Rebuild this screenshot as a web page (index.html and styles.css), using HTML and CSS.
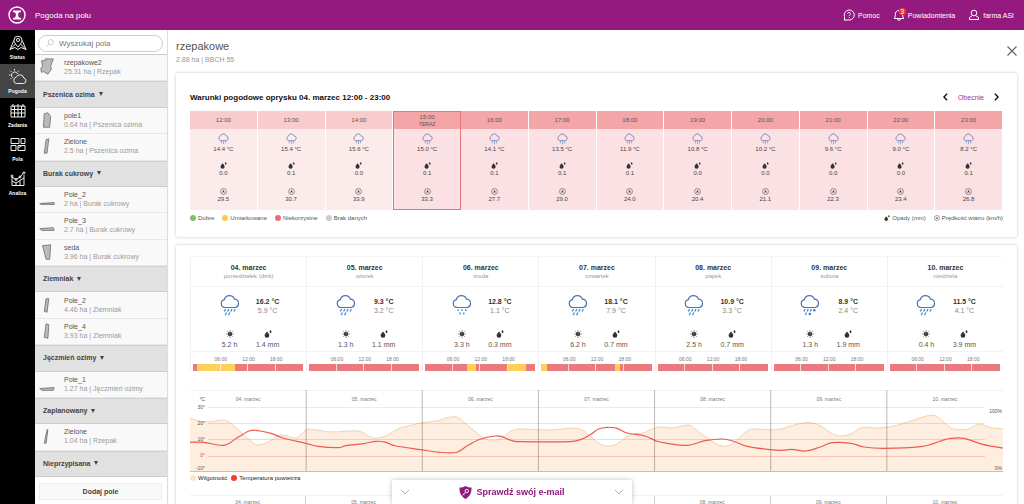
FILE: index.html
```html
<!DOCTYPE html>
<html lang="pl">
<head>
<meta charset="utf-8">
<title>Pogoda na polu</title>
<link rel="stylesheet" href="styles.css">
</head>
<body>
<svg class="sprite" aria-hidden="true">
  <symbol id="rain" viewBox="0 0 20 22">
    <path d="M5 13.500a4 4 0 0 1-.6-7.900A5.200 5.200 0 0 1 14.400 5.200a4.200 4.200 0 0 1 .8 8.300z" fill="none" stroke="#4c72ab" stroke-width="1.200"/>
    <path d="M5.600 15l-1.200 2.600M8.800 15l-1.200 2.600M12 15l-1.200 2.600M15.200 15l-1.200 2.600M6.400 18.600l-1.200 2.600M9.800 18.600l-1.200 2.600" stroke="#3a8fe0" stroke-width="1.300" fill="none"/>
  </symbol>
  <symbol id="drizzle" viewBox="0 0 20 22">
    <path d="M5 13.500a4 4 0 0 1-.6-7.900A5.200 5.200 0 0 1 14.400 5.200a4.200 4.200 0 0 1 .8 8.300z" fill="none" stroke="#4c72ab" stroke-width="1.200"/>
    <path d="M6.200 15.200v1.900M10 15.200v1.900M13.800 15.200v1.900M8 18.600v1.900M11.800 18.600v1.900" stroke="#3a8fe0" stroke-width="1.400" fill="none"/>
  </symbol>
  <symbol id="sleet" viewBox="0 0 20 22">
    <path d="M5 13.500a4 4 0 0 1-.6-7.900A5.200 5.200 0 0 1 14.400 5.200a4.200 4.200 0 0 1 .8 8.300z" fill="none" stroke="#4c72ab" stroke-width="1.200"/>
    <path d="M5 15l-1 2.400M8.200 15l-1 2.400M11.400 15l-1 2.400M6.400 18.600l-1 2.400" stroke="#3a8fe0" stroke-width="1.300" fill="none"/>
    <circle cx="14.300" cy="16.200" r="1.200" fill="#2f78d0"/><circle cx="9.800" cy="20" r="1.200" fill="#2f78d0"/>
  </symbol>
  <symbol id="shower" viewBox="0 0 20 22">
    <path d="M5 14a4.300 4.300 0 0 1-.6-8.300A5.300 5.300 0 0 1 14.600 5.200a4.500 4.500 0 0 1 .8 8.800z" fill="none" stroke="#8288b5" stroke-width="1.700"/>
    <path d="M6 14v5M10 14v6.500M14 14v5" stroke="#8ea8d6" stroke-width="1.800" fill="none"/>
  </symbol>
  <symbol id="drop" viewBox="0 0 8 8">
    <path d="M3 1.500C4.500 3.200 5.300 4.300 5.300 5.500a2.300 2.300 0 0 1-4.700 0C.6 4.300 1.600 3.200 3 1.500z" fill="#333"/>
    <path d="M6.500 0c.7.900 1 1.400 1 1.900a1 1 0 0 1-2 0c0-.5.400-1 1-1.900z" fill="#333"/>
  </symbol>
  <symbol id="wind" viewBox="0 0 8 8">
    <circle cx="4" cy="4" r="3.400" fill="none" stroke="#555" stroke-width=".7"/>
    <path d="M4 1.900l1.600 3.600L4 4.800l-1.600.7z" fill="#444"/>
  </symbol>
  <symbol id="sun" viewBox="0 0 8 8">
    <circle cx="4" cy="4" r="2.100" fill="#222"/>
    <path d="M4 0v8M0 4h8M1.200 1.200l5.600 5.600M6.800 1.200L1.200 6.800" stroke="#555" stroke-width=".6"/>
  </symbol>
  <symbol id="chev" viewBox="0 0 6 10"><path d="M5 1L1 5l4 4" fill="none" stroke="currentColor" stroke-width="1.800"/></symbol>
  <symbol id="down" viewBox="0 0 10 6"><path d="M1 1l4 4 4-4" fill="none" stroke="currentColor" stroke-width=".8"/></symbol>
</svg>

<header class="topbar">
  <a class="brand" href="#" aria-label="Start">
    <svg viewBox="0 0 18 18"><circle cx="9" cy="9" r="8" fill="none" stroke="#fff" stroke-width="1.400"/><path d="M5 4.500h8v1.700h-1.600c-.9.700-1.300 1.600-1.300 2.800s.4 2.100 1.300 2.800H13v1.700H5v-1.700h1.600c.9-.7 1.300-1.600 1.300-2.800s-.4-2.100-1.300-2.800H5z" fill="#fff"/></svg>
  </a>
  <h1 class="page-title">Pogoda na polu</h1>
  <nav class="user-nav">
    <a href="#"><svg class="nav-icon" viewBox="0 0 12 12"><path d="M1.500 11.500V7.500A5 5 0 1 1 6.200 11H1.500" fill="none" stroke="#fff"/><path d="M4.700 4.700a1.400 1.400 0 1 1 2 1.300c-.4.200-.5.400-.5.900M6.200 7.900v1" fill="none" stroke="#fff" stroke-width=".9"/></svg>Pomoc</a>
    <a href="#" class="bell"><svg class="nav-icon" viewBox="0 0 12 12"><path d="M1 9.500c1-.7 1.300-1.600 1.300-4A3.600 3.600 0 0 1 6 1.500a3.600 3.600 0 0 1 3.600 4c0 2.400.3 3.300 1.400 4zM4.500 9.800a1.500 1.500 0 0 0 3 0" fill="none" stroke="#fff"/></svg><span class="badge">3</span>Powiadomienia</a>
    <a href="#"><svg class="nav-icon" viewBox="0 0 12 12"><circle cx="6" cy="4" r="2.800" fill="none" stroke="#fff"/><path d="M4.500 6.500L1.500 8.500v2h9v-2l-3-2" fill="none" stroke="#fff"/></svg>farma ASI</a>
  </nav>
</header>

<div class="shell">
  <nav class="rail">
    <a href="#"><svg viewBox="0 0 18 16"><path d="M9 12C6 8.500 5 7 5 5.200a4 4 0 0 1 8 0C13 7 12 8.500 9 12z" /><circle cx="9" cy="5" r="1.600"/><path d="M4.800 5.500L1 14.500l5-2 3 2 3-2 5 2-3.800-9M1 14.500L6.500 9M17 14.500L11.500 9"/></svg>Status</a>
    <a href="#" class="active"><svg viewBox="0 0 18 16"><path d="M7.500 14.500a3.200 3.200 0 0 1-.3-6.300 4 4 0 0 1 7.600.8 2.800 2.800 0 0 1-.3 5.500zM3.600 8.600A3.200 3.200 0 1 1 8.700 5M5.500 0v1.500M1.300 1.800l1 1M0 6h1.500M9.800 1.800l-1 1M1.300 10.200l1-1"/></svg>Pogoda</a>
    <a href="#"><svg viewBox="0 0 18 16"><path d="M2 3h14v11H2zM2 6.500h14M2 10h14M5.500 3v11M9 3v11M12.500 3v11M4 1v3M14 1v3M9 1v2"/></svg>Zadania</a>
    <a href="#"><svg viewBox="0 0 18 16"><path d="M2 1.500h8v5H2zM12 1.500h4v5h-4zM2 8.500h5v5H2zM9 8.500h7v5H9zM9 11l4-2.500"/></svg>Pola</a>
    <a href="#"><svg viewBox="0 0 18 16"><path d="M3 6v8.500h12V4M3 10l4 2 8-5M7 12v2.500M11 9.500v5M3 6l4 2.500L11 6l3.500-4"/><circle cx="3" cy="5" r="1"/><circle cx="7" cy="8.500" r="1"/><circle cx="11" cy="6" r="1"/><circle cx="15" cy="1.800" r="1"/></svg>Analiza</a>
  </nav>

  <aside class="fields">
    <div class="search">
      <svg viewBox="0 0 8 8" aria-hidden="true"><circle cx="4.800" cy="3.200" r="2.600" fill="none" stroke="#aaa" stroke-width=".6"/><path d="M2.900 5.100L.5 7.500" stroke="#aaa" stroke-width=".6"/></svg>
      <input type="text" placeholder="Wyszukaj pola" aria-label="Wyszukaj pola">
    </div>
    <div class="field-list" id="fields"></div>
    <div class="add"><button type="button">Dodaj pole</button></div>
  </aside>

  <main class="main">
    <div class="field-head">
      <div>
        <h2>rzepakowe</h2>
        <p>2.88 ha | BBCH 55</p>
      </div>
      <button type="button" class="close" aria-label="Zamknij"><svg viewBox="0 0 10 10"><path d="M.5.5l9 9M9.500.5l-9 9" stroke="#666" stroke-width="1.200"/></svg></button>
    </div>

    <section class="card spray">
      <div class="spray-head">
        <h3>Warunki pogodowe oprysku 04. marzec 12:00 - 23:00</h3>
        <div class="pager">
          <button type="button" aria-label="Poprzednie"><svg><use href="#chev"/></svg></button>
          <a href="#">Obecnie</a>
          <button type="button" class="next" aria-label="Następne"><svg><use href="#chev"/></svg></button>
        </div>
      </div>
      <table class="hours">
        <thead><tr id="h-time"></tr></thead>
        <tbody><tr id="h-temp"></tr><tr id="h-rain"></tr><tr id="h-wind"></tr></tbody>
      </table>
      <div class="legend">
        <span><i class="dot good"></i>Dobre</span>
        <span><i class="dot fair"></i>Umiarkowane</span>
        <span><i class="dot bad"></i>Niekorzystne</span>
        <span><i class="dot none"></i>Brak danych</span>
        <span class="push"><svg><use href="#drop"/></svg>Opady (mm)</span>
        <span><svg><use href="#wind"/></svg>Prędkość wiatru (km/h)</span>
      </div>
    </section>

    <section class="card forecast">
      <div class="days" id="days"></div>
      <div class="chart">
        <svg class="plot" viewBox="0 0 813 82" preserveAspectRatio="none" id="plot"></svg>
        <div class="chart-days" id="chart-days"></div>
        <div class="axis"><span>°C</span><span>30°</span><span>20°</span><span>10°</span><span class="zero">0°</span><span>-10°</span></div>
        <div class="axis right"><span>100%</span><span>0%</span></div>
      </div>
      <div class="legend series">
        <span><i class="dot humidity"></i>Wilgotność</span>
        <span><i class="dot temp"></i>Temperatura powietrza</span>
      </div>
      <div class="chart-days second" id="chart-days-2"></div>
    </section>
  </main>
</div>

<div class="notice">
  <svg class="arrow"><use href="#down"/></svg>
  <a href="#"><svg class="shield" viewBox="0 0 13 13"><path d="M6.500 0C8.500 1.200 10.500 1.500 12.500 1.500c.3 5-1.500 9-6 11.500C2 10.500.2 6.500.5 1.500c2 0 4-.3 6-1.500z" fill="#8e1a7c"/><circle cx="7.800" cy="5" r="1.700" fill="none" stroke="#fff" stroke-width=".9"/><path d="M6.500 6.300L3.500 9.200M4.600 8.200l1 1" stroke="#fff" stroke-width=".9"/></svg>Sprawdź swój e-mail</a>
  <svg class="arrow"><use href="#down"/></svg>
</div>
<script src="app.js"></script>
</body>
</html>
```

FILE: styles.css
```css
* { box-sizing: border-box; }
body {
  margin: 0;
  height: 100vh;
  display: flex;
  flex-direction: column;
  overflow: hidden;
  background: #fff;
  color: #555;
  font: 7px/9px "Liberation Sans", Arial, sans-serif;
}
h1, h2, h3, p { margin: 0; font-weight: normal; }
a { color: inherit; text-decoration: none; }
button { font: inherit; color: inherit; background: none; border: 0; padding: 0; }
svg { display: block; fill: none; }
.sprite { position: absolute; width: 0; height: 0; }

.topbar {
  flex: none;
  height: 30px;
  display: flex;
  align-items: center;
  background: #941a80;
  color: #fff;
}
.brand { width: 35px; padding-left: 8px; }
.brand svg { width: 18px; height: 18px; }
.page-title { font-size: 8px; }
.user-nav { margin-left: auto; padding-right: 10px; display: flex; gap: 13px; }
.user-nav a { display: flex; align-items: center; gap: 3px; position: relative; }
.nav-icon { width: 12px; height: 12px; }
.badge {
  position: absolute;
  left: 6px;
  top: -1px;
  width: 7px;
  height: 7px;
  border-radius: 3px;
  background: #e8372c;
  font-size: 7px;
  line-height: 7px;
  text-align: center;
}

.shell { flex: 1; min-height: 0; display: flex; }
.rail { flex: none; width: 35px; background: #000; color: #fff; font-size: 5px; line-height: 6px; font-weight: bold; }
.rail a { height: 34px; padding-top: 5px; display: flex; flex-direction: column; align-items: center; gap: 3px; }
.rail a.active { background: #444; }
.rail svg { width: 18px; height: 16px; stroke: #eee; stroke-width: 1; }

.fields {
  flex: none;
  width: 133px;
  display: flex;
  flex-direction: column;
  border-right: 1px solid #ddd;
}
.search { padding: 5px 4px 2px 3px; position: relative; border-bottom: 1px solid #ccc; }
.search svg { position: absolute; left: 11px; top: 9px; width: 8px; height: 8px; }
.search input {
  display: block;
  width: 100%;
  height: 17px;
  padding: 0 8px 0 20px;
  border: 1px solid #ccc;
  border-radius: 9px;
  font: 8px "Liberation Sans", Arial, sans-serif;
}
.search input::placeholder { color: #777; opacity: 1; }
.field-list { flex: 1; display: grid; grid-auto-rows: 1fr; background: #f9f9f9; }
.group {
  display: flex;
  align-items: center;
  gap: 4px;
  padding: 0 9px 1px 8px;
  background: #e1e1e1;
  border-bottom: 1px solid #ccc;
  border-top: 1px solid #d0d0d0;
  font-weight: bold;
  color: #444;
  text-align: left;
}
.group::after { content: ""; border: 2px solid transparent; border-top: 4px solid #444; border-bottom: 0; }
.field { display: flex; align-items: center; padding-bottom: 1px; border-bottom: 1px solid #e8e8e8; }
.field svg { width: 18px; height: 18px; margin: 0 8px 0 3px; fill: #bbb; stroke: #777; stroke-width: 1; }
.field small { display: block; font-size: 7px; color: #999; }
.add { padding: 6px 5px 4px 4px; }
.add button { width: 100%; height: 17px; background: #f9f9f9; border: 1px solid #eee; font-weight: bold; color: #444; }

.main { flex: 1; min-width: 0; padding: 0 7px 0 8px; overflow: hidden; }
.field-head { height: 43px; padding-top: 10px; display: flex; justify-content: space-between; align-items: flex-start; }
.field-head h2 { font-size: 11px; line-height: 12px; color: #555; }
.field-head p { color: #999; margin-top: 3px; }
.close { margin-top: 6px; }
.close svg { width: 10px; height: 10px; }
.card { background: #fff; border-radius: 2px; box-shadow: 0 0 3px rgba(0, 0, 0, .25); padding: 0 14px; }
.spray { padding-top: 16px; padding-bottom: 15px; }
.spray-head { display: flex; justify-content: space-between; align-items: center; height: 16px; margin-bottom: 6px; }
.spray-head h3 { font-size: 8px; font-weight: bold; color: #111; }
.pager { display: flex; align-items: center; gap: 10px; padding-right: 4px; font-size: 7px; color: #a2329a; }
.pager svg { width: 5px; height: 8px; color: #111; }
.pager .next { transform: scaleX(-1); }

.hours { width: 100%; table-layout: fixed; border-collapse: separate; border-spacing: 0; font-size: 6px; line-height: 8px; text-align: center; }
.hours th, .hours td { padding: 0; border-right: 1px solid #fff; }
.hours th { height: 18px; font-weight: normal; background: #f3a5a7; }
.hours td { height: 27px; vertical-align: top; background: #fbe1e3; color: #444; }
.hours th.past { background: #f8cbcd; }
.hours td.past { background: #fcebeb; }
.hours .now { border-left: 1px solid #e0787d; border-right-color: #e0787d; }
.hours th.now { border-top: 1px solid #e0787d; }
.hours tr:last-child td.now { border-bottom: 1px solid #e0787d; }
.hours th small { display: block; font-size: 5px; line-height: 7px; }
.hours svg { margin: 0 auto; width: 7px; height: 7px; }
#h-temp td { padding-top: 4px; }
#h-temp svg { width: 11px; height: 12px; }
#h-rain td { padding-top: 6px; }
#h-wind td { padding-top: 5px; }

.legend { display: flex; align-items: center; gap: 8px; margin-top: 4px; font-size: 6px; line-height: 8px; color: #555; }
.legend span { display: flex; align-items: center; gap: 2px; }
.legend svg { width: 6px; height: 6px; }
.legend .push { margin-left: auto; }
.dot { width: 6px; height: 6px; border-radius: 50%; }
.good { background: #7cc36a; }
.fair { background: #fcc846; }
.bad { background: #ea6f78; }
.none { background: #ccc; }
.humidity { background: #fde3c8; }
.temp { background: #f23c30; }

.forecast { margin-top: 8px; padding-top: 11px; padding-bottom: 14px; }
.days { display: grid; grid-template-columns: repeat(7, 1fr); border-top: 1px solid #f6f6f6; }
.day { text-align: center; border-left: 1px solid #f2f2f2; }
.day header { height: 30px; padding-top: 6px; border-bottom: 1px solid #f2f2f2; }
.day header b { display: block; color: #333; }
.day header span { font-size: 6px; line-height: 8px; display: block; color: #999; }
.day .facts { height: 65px; padding-top: 7px; display: grid; grid-template-columns: 38px 38px; justify-content: center; justify-items: center; grid-template-rows: 36px 20px; border-bottom: 1px solid #f2f2f2; }
.day .sky { width: 20px; height: 22px; }
.day .temps { padding-top: 3px; }
.day .temps b { display: block; color: #333; }
.day .temps span { color: #888; }
.day .fact { font-size: 7px; }
.day .fact svg { width: 8px; height: 8px; margin: 0 auto 2px; }
.day .scale { display: flex; justify-content: center; margin: 3px 2px 0; font-size: 5px; line-height: 8px; color: #777; }
.day .scale span { width: 25%; }
.bar { height: 7px; margin: 1px 3px 0 2px; background: #ea7a7e; display: flex; }
.bar i { width: 25%; border-right: 1px solid rgba(255, 255, 255, .7); }

.chart { position: relative; margin-top: 19px; }
.plot { width: 100%; height: 82px; }
.chart-days { position: absolute; inset: 0 0 auto; display: grid; grid-template-columns: repeat(7, 1fr); font-size: 5px; line-height: 8px; text-align: center; color: #777; }
.chart-days span { padding-top: 5px; }
.axis { position: absolute; inset: 5px auto 0 1px; width: 14px; display: flex; flex-direction: column; font-size: 5px; line-height: 8px; text-align: right; }
.axis span { flex: none; height: 16px; }
.axis span:first-child { height: 8px; }
.axis span:nth-child(5) { height: 13px; }
.axis .zero { color: #e8372c; }
.axis.right { inset: 17px 1px 0 auto; width: 16px; justify-content: space-between; }
.axis.right span { height: 8px; }
.series { margin-top: 2px; gap: 4px; color: #222; }
.second { position: static; margin-top: 13px; border-top: 1px solid #f2f2f2; }
.second span { border-right: 1px solid #ccc; padding: 3px 0 60px; line-height: 6px; }
.second span:last-child { border-right: 0; }

.notice {
  position: fixed;
  left: 50%;
  bottom: 0;
  transform: translateX(-50%);
  width: 240px;
  height: 24px;
  padding: 0 8px;
  display: flex;
  align-items: center;
  justify-content: space-between;
  background: #fff;
  box-shadow: 0 0 5px rgba(0, 0, 0, .25);
  color: #8e1a7c;
  font-size: 9px;
  font-weight: bold;
}
.notice a { display: flex; align-items: center; gap: 4px; }
.shield { width: 13px; height: 13px; }
.arrow { width: 10px; height: 6px; color: #999; }
```

FILE: app.js
```js
const use = (id, cls = "") => `<svg class="${cls}"><use href="#${id}"/></svg>`;
const fill = (id, html) => { document.getElementById(id).innerHTML = html; };

const fields = [
  ["rzepakowe2", "25.31 ha | Rzepak", "3,3 7,3 7,1 16,1 13,9 14,12 10,18 5,15 3,16 2,12 4,9"],
  "Pszenica ozima",
  ["pole1", "0.64 ha | Pszenica ozima", "6,3 10,2 13,6 12,18 5,18"],
  ["Zielone", "2.5 ha | Pszenica ozima", "8,3 11,2 9,18 6,18"],
  "Burak cukrowy",
  ["Pole_2", "2 ha | Burak cukrowy", "1,15 17,14 17,16 2,16"],
  ["Pole_3", "2.7 ha | Burak cukrowy", "1,14 16,13 17,16 3,16"],
  ["seda", "3.96 ha | Burak cukrowy", "4,3 13,2 12,18 8,18"],
  "Ziemniak",
  ["Pole_2", "4.46 ha | Ziemniak", "8,3 11,3 9,18 6,17"],
  ["Pole_4", "3.93 ha | Ziemniak", "8,2 11,3 10,18 6,17"],
  "Jęczmień ozimy",
  ["Pole_1", "1.27 ha | Jęczmień ozimy", "1,15 17,14 16,17 3,17"],
  "Zaplanowany",
  ["Zielone", "1.04 ha | Rzepak", "9,3 10,3 8,18 6,18"],
  "Nieprzypisana"
];
fill("fields", fields.map(f => typeof f === "string"
  ? `<button type="button" class="group">${f}</button>`
  : `<a href="#" class="field"><svg viewBox="0 0 18 20"><polygon points="${f[2]}"/></svg><span>${f[0]}<small>${f[1]}</small></span></a>`).join(""));

const hours = [
  [12, "14.4", "0.0", "29.5"], [13, "15.4", "0.1", "30.7"], [14, "15.6", "0.0", "33.9"],
  [15, "15.0", "0.1", "33.3"], [16, "14.1", "0.1", "27.7"], [17, "13.5", "0.1", "29.0"],
  [18, "11.9", "0.1", "24.0"], [19, "10.8", "0.0", "20.4"], [20, "10.2", "0.0", "21.1"],
  [21, "9.6", "0.0", "22.3"], [22, "9.0", "0.0", "23.4"], [23, "8.2", "0.1", "26.8"]
];
const state = h => h < 15 ? "past" : h === 15 ? "now" : "next";
const row = (id, tag, cell) => fill(id, hours.map(h => `<${tag} class="${state(h[0])}">${cell(h)}</${tag}>`).join(""));
row("h-time", "th", h => `${h[0]}:00${h[0] === 15 ? "<small>TERAZ</small>" : ""}`);
row("h-temp", "td", h => `${use("shower")}${h[1]} °C`);
row("h-rain", "td", h => use("drop") + h[2]);
row("h-wind", "td", h => use("wind") + h[3]);

const days = [
  ["04", "poniedziałek (dziś)", "rain", "16.2", "5.9", "5.2", "1.4", [[4, 38]]],
  ["05", "wtorek", "rain", "9.3", "3.2", "1.3", "1.1", []],
  ["06", "środa", "drizzle", "12.8", "1.1", "3.3", "0.3", [[38, 46], [75, 92]]],
  ["07", "czwartek", "rain", "18.1", "7.9", "6.2", "0.7", [[0, 5], [67, 71]]],
  ["08", "piątek", "rain", "10.9", "3.3", "2.5", "0.7", []],
  ["09", "sobota", "sleet", "8.9", "2.4", "1.3", "1.9", []],
  ["10", "niedziela", "rain", "11.5", "4.1", "0.4", "3.9", []]
];
const bands = list => list.length
  ? ` style="background-image:linear-gradient(90deg,${list.map(([a, b]) => `transparent ${a}%,#fdd05a ${a}%,#fdd05a ${b}%,transparent ${b}%`).join(",")})"` : "";
fill("days", days.map(d => `<article class="day">
  <header><b>${d[0]}. marzec</b><span>${d[1]}</span></header>
  <div class="facts">${use(d[2], "sky")}<div class="temps"><b>${d[3]} °C</b><span>${d[4]} °C</span></div>
  <div class="fact">${use("sun")}${d[5]} h</div><div class="fact">${use("drop")}${d[6]} mm</div></div>
  <div class="scale"><span>06:00</span><span>12:00</span><span>18:00</span></div>
  <div class="bar"${bands(d[7])}><i></i><i></i><i></i></div></article>`).join(""));
const labels = days.map(d => `<span>${d[0]}. marzec</span>`).join("");
fill("chart-days", labels);
fill("chart-days-2", labels);

const humidity = [[0,28],[9,31],[19,32],[34,30],[44,36],[54,45],[63,53],[69,55],[78,52],[91,45],[106,48],[116,40],[124,39.7],[143,42],[168,41],[183,48],[196,46],[208,39],[231,33],[246,31],[256,28],[266,27],[275,33],[292,47],[302,51],[312,48],[322,40.5],[333,39],[360,40],[387,38.3],[400,46],[410,54],[418,56],[427,54],[440,45],[453,43],[460,40],[470,37],[483,38],[498,35],[505,39],[520,50],[532,56],[542,54],[557,41],[566,39],[587,39.7],[604,35],[617,32.7],[629,35],[641,43],[649,46],[661,44],[672,37.5],[687,38],[704,36],[721,31],[734,26.7],[746,26],[761,38],[774,39.7],[781,38],[789,34],[802,38],[813,38.7]];
const temperature = [[0,52.3],[14,52.3],[34,55.3],[48,47.3],[59,41],[66,40.3],[81,43.3],[93,48],[116,53.3],[128,56.3],[148,57.7],[156,55.7],[173,53.7],[186,51.3],[196,52.3],[206,56],[231,59.7],[249,62.3],[266,62.5],[277,56],[290,49.3],[305,46],[312,46.7],[322,50.7],[333,51.7],[383,51.3],[400,44.7],[408,39.3],[417,37.3],[427,38.3],[437,43],[455,46],[467,51.3],[477,53.3],[498,55.3],[515,50.7],[532,49],[543,51],[557,56.3],[581,59.7],[592,60.3],[602,59.3],[616,61],[631,56.7],[642,52.7],[661,53.3],[674,57],[694,58.3],[731,56.7],[744,53.3],[759,48.7],[774,48.3],[789,53.3],[804,56.7],[813,58]];
const smooth = p => p.reduce((d, [x, y], i) => {
  if (!i) return `M${x} ${y}`;
  const a = p[i - 1], z = p[i - 2] || a, n = p[i + 1] || p[i];
  return `${d}C${a[0] + (x - z[0]) / 6} ${a[1] + (y - z[1]) / 6} ${x - (n[0] - a[0]) / 6} ${y - (n[1] - a[1]) / 6} ${x} ${y}`;
}, "");
const line = (x1, y1, x2, y2, c) => `<path d="M${x1} ${y1}L${x2} ${y2}" stroke="${c}"/>`;
const hum = smooth(humidity);
fill("plot",
  `<path d="${hum}V81.500H0Z" fill="#feeedf"/><path d="${hum}" stroke="#f1d3ae" stroke-width="1"/>` +
  line(0, 0.5, 813, 0.5, "#f2f2f2") +
  line(18, 17.5, 795, 17.5, "#ebebeb") + line(18, 33.5, 795, 33.5, "rgba(120,140,140,.22)") +
  line(18, 49.5, 795, 49.5, "rgba(120,120,120,.22)") + line(18, 66.5, 795, 66.5, "rgba(235,80,70,.25)") +
  [1, 2, 3, 4, 5, 6].map(i => line(i * 813 / 7, 0, i * 813 / 7, 82, "rgba(80,70,60,.38)")).join("") +
  line(0, 81.5, 813, 81.5, "#c9beb3") +
  `<path d="${smooth(temperature)}" stroke="#ee5a50" stroke-width="1.200"/>`);
```
